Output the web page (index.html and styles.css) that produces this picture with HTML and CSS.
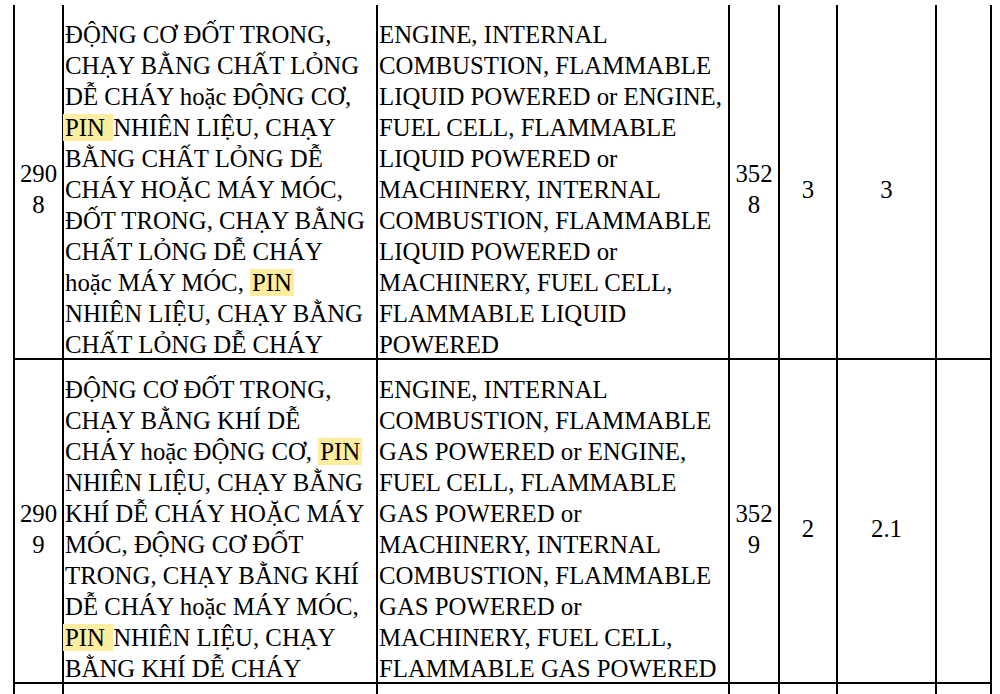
FILE: index.html
```html
<!DOCTYPE html>
<html lang="vi">
<head>
<meta charset="utf-8">
<title>Bảng hàng nguy hiểm</title>
<link rel="stylesheet" href="styles.css">
</head>
<body>
<div class="grid">
  <div class="cell num"><p class="txt">290<br>8</p></div>
  <div class="cell"><p class="txt">ĐỘNG CƠ ĐỐT TRONG,<br>CHẠY BẰNG CHẤT LỎNG<br>DỄ CHÁY hoặc ĐỘNG CƠ,<br><span class="hl start">PIN </span>NHIÊN LIỆU, CHẠY<br>BẰNG CHẤT LỎNG DỄ<br>CHÁY HOẶC MÁY MÓC,<br>ĐỐT TRONG, CHẠY BẰNG<br>CHẤT LỎNG DỄ CHÁY<br>hoặc MÁY MÓC, <span class="hl">PIN</span><br>NHIÊN LIỆU, CHẠY BẰNG<br>CHẤT LỎNG DỄ CHÁY</p></div>
  <div class="cell"><p class="txt">ENGINE, INTERNAL<br>COMBUSTION, FLAMMABLE<br>LIQUID POWERED or ENGINE,<br>FUEL CELL, FLAMMABLE<br>LIQUID POWERED or<br>MACHINERY, INTERNAL<br>COMBUSTION, FLAMMABLE<br>LIQUID POWERED or<br>MACHINERY, FUEL CELL,<br>FLAMMABLE LIQUID<br>POWERED</p></div>
  <div class="cell num"><p class="txt">352<br>8</p></div>
  <div class="cell num"><p class="txt">3</p></div>
  <div class="cell num"><p class="txt">3</p></div>
  <div class="cell num"><p class="txt"></p></div>

  <div class="cell num"><p class="txt">290<br>9</p></div>
  <div class="cell"><p class="txt">ĐỘNG CƠ ĐỐT TRONG,<br>CHẠY BẰNG KHÍ DỄ<br>CHÁY hoặc ĐỘNG CƠ, <span class="hl">PIN</span><br>NHIÊN LIỆU, CHẠY BẰNG<br>KHÍ DỄ CHÁY HOẶC MÁY<br>MÓC, ĐỘNG CƠ ĐỐT<br>TRONG, CHẠY BẰNG KHÍ<br>DỄ CHÁY hoặc MÁY MÓC,<br><span class="hl start">PIN </span>NHIÊN LIỆU, CHẠY<br>BẰNG KHÍ DỄ CHÁY</p></div>
  <div class="cell"><p class="txt">ENGINE, INTERNAL<br>COMBUSTION, FLAMMABLE<br>GAS POWERED or ENGINE,<br>FUEL CELL, FLAMMABLE<br>GAS POWERED or<br>MACHINERY, INTERNAL<br>COMBUSTION, FLAMMABLE<br>GAS POWERED or<br>MACHINERY, FUEL CELL,<br>FLAMMABLE GAS POWERED</p></div>
  <div class="cell num"><p class="txt">352<br>9</p></div>
  <div class="cell num"><p class="txt">2</p></div>
  <div class="cell num"><p class="txt">2.1</p></div>
  <div class="cell num"><p class="txt"></p></div>

  <div class="cell num"><p class="txt"></p></div>
  <div class="cell"><p class="txt"></p></div>
  <div class="cell"><p class="txt"></p></div>
  <div class="cell num"><p class="txt"></p></div>
  <div class="cell num"><p class="txt"></p></div>
  <div class="cell num"><p class="txt"></p></div>
  <div class="cell num"><p class="txt"></p></div>
</div>
</body>
</html>
```
FILE: styles.css
```css
html, body {
  margin: 0;
  padding: 0;
  background: #ffffff;
  overflow: hidden;
}

body {
  font-family: "Liberation Serif", "Times New Roman", serif;
  color: #000000;
}

.grid {
  display: grid;
  width: max-content;
  grid-template-columns: 49px 314px 352px 50px 58px 99px 55px;
  grid-template-rows: 355px 324px 40px;
  margin: 5px 0 0 13px;
  border-left: 2px solid #000000;
}

.cell {
  box-sizing: border-box;
  display: flex;
  flex-direction: column;
  justify-content: center;
  padding: 15px 1px 0 1px;
  border-right: 2px solid #000000;
  border-bottom: 2px solid #000000;
  font-size: 24.8px;
  line-height: 31px;
  white-space: nowrap;
  min-width: 0;
}

.txt {
  margin: 0;
}

.num {
  text-align: center;
  padding-left: 0;
  padding-right: 0;
}

.hl {
  background: #fcee9e;
  padding: 0 2px;
}

.hl.start {
  margin-left: -2px;
}
```
